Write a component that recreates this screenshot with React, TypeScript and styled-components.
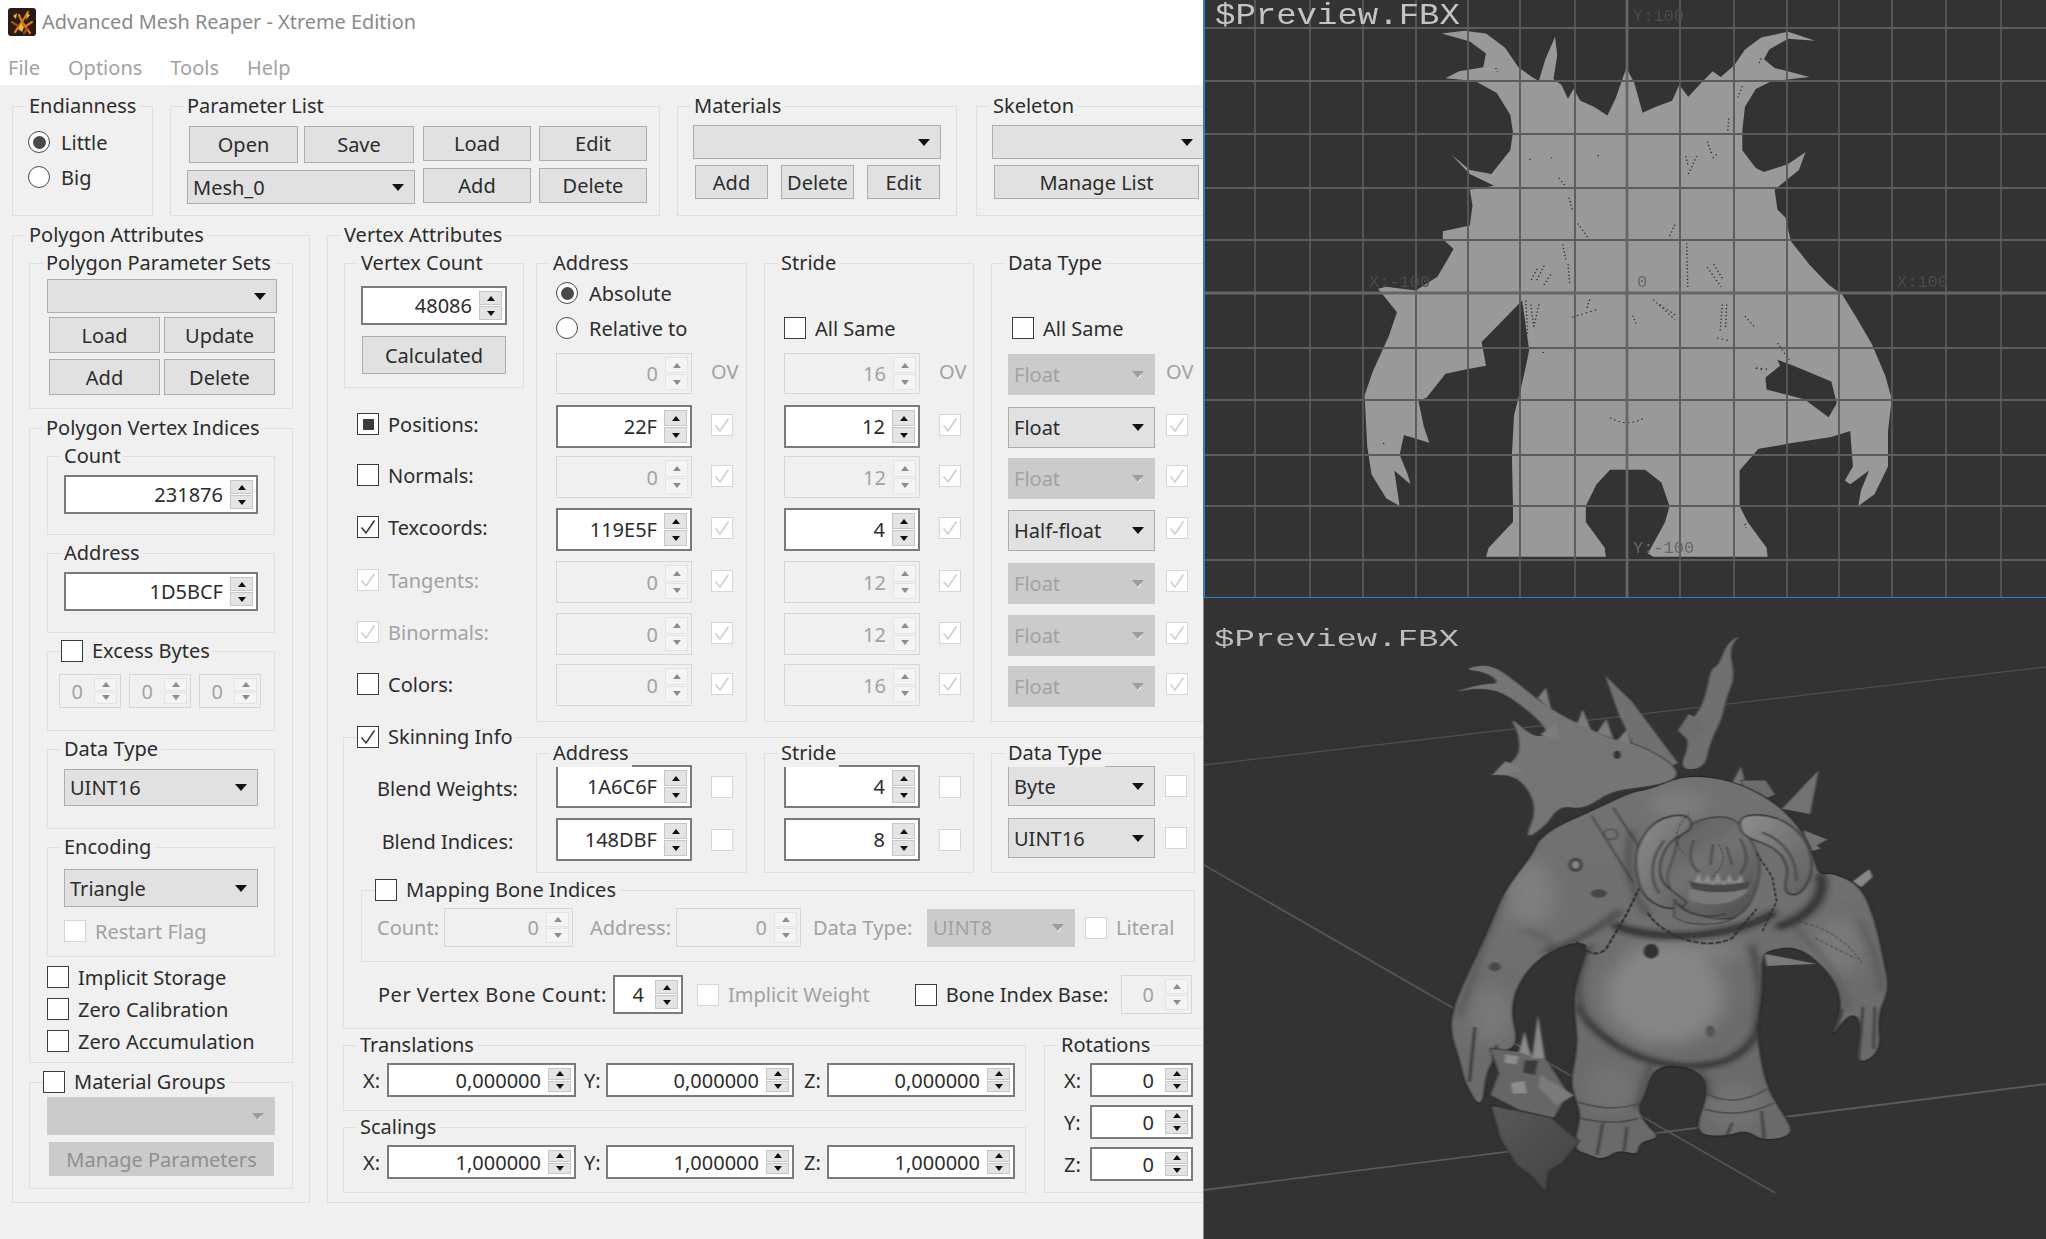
import React from "react";
import styled, { createGlobalStyle } from "styled-components";

const Global = createGlobalStyle`
  html, body { margin: 0; padding: 0; background: #fff; overflow: hidden; }
  * { box-sizing: border-box; }
`;

const Page = styled.div`
  display: flex; width: 2046px; height: 1239px; overflow: hidden;
  font-family: "Noto Sans", "Open Sans", sans-serif; font-size: 20px; color: #2c2c2c;
  filter: blur(0.35px);
`;
const LeftSide = styled.div`display: flex; flex-direction: column; width: 1203px; height: 1239px; overflow: hidden;`;
const TitleBar = styled.div`display: flex; align-items: center; gap: 6px; height: 43px; padding-left: 8px; color: #8a8a8a; font-size: 19.9px; background: #fff;`;
const MenuBar = styled.div`display: flex; align-items: center; gap: 28px; height: 42px; padding: 6px 0 0 8px; color: #a2a2a2; background: #fff;`;
const Panel = styled.div`flex: 1; background: #f0f0f0; padding: 21px 0 0 12px; display: flex; flex-direction: column; gap: 19px; overflow: hidden;`;
const Row = styled.div<{ $gap?: number }>`display: flex; align-items: flex-start; gap: ${(p) => p.$gap ?? 17}px;`;
const Col = styled.div<{ $gap?: number; $ml?: number }>`display: flex; flex-direction: column; gap: ${(p) => p.$gap ?? 0}px; margin-left: ${(p) => p.$ml ?? 0}px;`;

const Group = styled.section<{ $w: number; $h: number; $pad?: string; $gap?: number; $ml?: number; $row?: boolean }>`
  position: relative; flex: none; display: flex; flex-direction: ${(p) => (p.$row ? "row" : "column")};
  align-items: flex-start;
  width: ${(p) => p.$w}px; height: ${(p) => p.$h}px; padding: ${(p) => p.$pad ?? "0"};
  gap: ${(p) => p.$gap ?? 0}px; margin-left: ${(p) => p.$ml ?? 0}px;
  border: 1.5px solid #dedede;
`;
const Title = styled.div`
  position: absolute; top: -15px; left: 13px; padding: 0 3px; height: 28px; line-height: 28px;
  background: #f0f0f0; white-space: nowrap; color: #2c2c2c;
`;
const CheckTitle = styled(Title)`display: flex; align-items: center; gap: 9px; left: 13px; padding: 0 3px 0 0;`;

const Btn = styled.div<{ $w: number; $h: number; $off?: boolean; $ml?: number }>`
  flex: none; display: flex; align-items: center; justify-content: center;
  width: ${(p) => p.$w}px; height: ${(p) => p.$h}px; margin-left: ${(p) => p.$ml ?? 0}px;
  background: ${(p) => (p.$off ? "#cbcbcb" : "#e1e1e1")};
  border: 1.5px solid ${(p) => (p.$off ? "#cbcbcb" : "#adadad")};
  color: ${(p) => (p.$off ? "#8f8f8f" : "#2c2c2c")};
`;

const ComboBox = styled.div<{ $w: number; $h: number; $off?: boolean; $mt?: number }>`
  flex: none; display: flex; align-items: center; justify-content: space-between;
  width: ${(p) => p.$w}px; height: ${(p) => p.$h}px; padding: 0 10px 0 5px; margin-top: ${(p) => p.$mt ?? 0}px;
  background: ${(p) => (p.$off ? "#cbcbcb" : "#e1e1e1")};
  border: 1.5px solid ${(p) => (p.$off ? "#cbcbcb" : "#adadad")};
  color: ${(p) => (p.$off ? "#a2a2a2" : "#2c2c2c")};
`;
const ComboArrow = styled.i<{ $off?: boolean }>`
  flex: none; position: relative; width: 0; height: 0; border-style: solid; border-width: 7px 6.5px 0;
  border-color: ${(p) => (p.$off ? "#9d9d9d" : "#111")} transparent transparent;
  ${(p) => (p.$off ? `&::after { content: ""; position: absolute; left: -1px; top: -4px; width: 4px; height: 5px; background: #f2f2f2; clip-path: polygon(100% 0, 100% 30%, 30% 100%, 0 100%); }` : "")}
`;

const SpinBox = styled.div<{ $w: number; $h: number; $off?: boolean }>`
  flex: none; display: flex; align-items: stretch;
  width: ${(p) => p.$w}px; height: ${(p) => p.$h}px; padding: 3px;
  background: ${(p) => (p.$off ? "#f0f0f0" : "#fff")};
  border: ${(p) => (p.$off ? "1.5px solid #d6d6d6" : "2px solid #7b7b7b")};
  color: ${(p) => (p.$off ? "#a2a2a2" : "#2c2c2c")};
`;
const SpinValue = styled.span<{ $center?: boolean }>`
  flex: 1; display: flex; align-items: center; justify-content: flex-end;
  padding-right: ${(p) => (p.$center ? 11 : 7)}px; min-width: 0;
`;
const Stepper = styled.span`flex: none; display: flex; flex-direction: column; gap: 1px; width: 23px;`;
const Step = styled.span<{ $off?: boolean }>`
  flex: 1; display: flex; align-items: center; justify-content: center;
  background: ${(p) => (p.$off ? "#f4f4f4" : "#e4e4e4")};
  border: 1px solid ${(p) => (p.$off ? "#e4e4e4" : "#c6c6c6")};
`;
const Tri = styled.i<{ $down?: boolean; $off?: boolean }>`
  width: 0; height: 0; border-style: solid;
  border-width: ${(p) => (p.$down ? "5px 4.5px 0" : "0 4.5px 5px")};
  border-color: transparent;
  ${(p) => (p.$down ? "border-top-color" : "border-bottom-color")}: ${(p) => (p.$off ? "#8c8c8c" : "#111")};
`;

const CheckBox = styled.span<{ $off?: boolean; $mt?: number }>`
  flex: none; display: flex; align-items: center; justify-content: center;
  width: 22px; height: 22px; margin-top: ${(p) => p.$mt ?? 0}px;
  background: #fff; border: 1.5px solid ${(p) => (p.$off ? "#d6d6d6" : "#3c3c3c")};
`;
const PartialMark = styled.i`width: 11px; height: 11px; background: #3c3c3c;`;
const RadioDot = styled.span<{ $on?: boolean }>`
  flex: none; display: flex; align-items: center; justify-content: center;
  width: 22px; height: 22px; border-radius: 50%; background: #fff;
  border: 1.5px solid #4a4a4a;
  &::after { content: ""; display: ${(p) => (p.$on ? "block" : "none")}; width: 13px; height: 13px; border-radius: 50%; background: #4a4a4a; }
`;
const Option = styled.div<{ $gap?: number; $off?: boolean; $ml?: number; $mt?: number; $h?: number }>`
  flex: none; display: flex; align-items: center; gap: ${(p) => p.$gap ?? 9}px; white-space: nowrap;
  height: ${(p) => p.$h ?? 22}px; margin-left: ${(p) => p.$ml ?? 0}px; margin-top: ${(p) => p.$mt ?? 0}px;
  color: ${(p) => (p.$off ? "#a2a2a2" : "#2c2c2c")};
`;
const FieldLabel = styled.span<{ $w?: number; $ml?: number; $off?: boolean }>`
  flex: none; white-space: nowrap; width: ${(p) => (p.$w ? `${p.$w}px` : "auto")}; margin-left: ${(p) => p.$ml ?? 0}px;
  color: ${(p) => (p.$off ? "#a2a2a2" : "#2c2c2c")};
`;
const FlatRow = styled.div<{ $w?: number; $ml?: number; $mt?: number }>`
  display: flex; align-items: center; margin-left: ${(p) => p.$ml ?? 0}px; margin-top: ${(p) => p.$mt ?? 0}px;
  ${(p) => (p.$w ? `width:${p.$w}px;` : "")}
`;
const Spacer = styled.span`flex: 1;`;
const WideLabel = styled(FieldLabel)`letter-spacing: 0.5px;`;
const Head = styled.div<{ $ml?: number }>`
  display: flex; flex-direction: column; justify-content: flex-end; gap: 13px; height: 58px; margin: 0 0 14px ${(p) => p.$ml ?? 0}px;
`;
const AttrGrid = styled.div<{ $cell: number; $gap: number; $rows?: string }>`
  display: grid; align-items: start; grid-template-columns: ${(p) => p.$cell}px 22px; column-gap: ${(p) => p.$gap}px;
  grid-template-rows: ${(p) => p.$rows ?? "52px 51px 52px 53px 52px 51px 43px"};
`;
const NameGrid = styled.div`
  display: grid; margin: 17px 0 0 13px; grid-template-rows: 51px 52px 53px 52px 52px 43px; align-items: start;
`;
const BlendNames = styled.div`
  flex: none; width: 175px; height: 120px; display: grid; grid-template-rows: 53px 53px; padding: 22px 0 0 32px; text-align: center; line-height: 28px;
`;
const OvText = styled.span`height: 41px; line-height: 38px; color: #a2a2a2; white-space: nowrap;`;
const SmallBtnRow = styled.div<{ $gap: number; $mt: number; $ml?: number }>`
  display: flex; gap: ${(p) => p.$gap}px; margin-top: ${(p) => p.$mt}px; margin-left: ${(p) => p.$ml ?? 0}px;
`;
const ParamLeft = styled.div`display: flex; flex-direction: column; width: 228px; gap: 7px;`;
const ParamRight = styled.div`display: grid; grid-template-columns: 108px 108px; grid-auto-rows: 35px; gap: 7px 8px;`;

const RightSide = styled.div`display: flex; flex-direction: column; width: 843px; height: 1239px;`;
const TopView = styled.div`position: relative; flex: none; height: 598px; background: #333; border-left: 2px solid #2f7fc8; border-bottom: 1.5px solid #2f7fc8; overflow: hidden;`;
const BottomView = styled.div`position: relative; flex: 1; background: #333; border-left: 1.5px solid #8a8a8a; overflow: hidden;`;
const ViewSvg = styled.svg`display: block; width: 100%; height: 100%;`;
const FileTag = styled.span<{ $top: number; $sy: number; $c: string }>`
  position: absolute; left: 10px; top: ${(p) => p.$top}px; font-family: "Liberation Mono", monospace; font-size: 34px; line-height: 34px;
  color: ${(p) => p.$c}; transform-origin: left top; transform: scaleY(${(p) => p.$sy});
`;
const AxisTag = styled.span<{ $x: number; $y: number; $dark?: boolean }>`
  position: absolute; left: ${(p) => p.$x}px; top: ${(p) => p.$y}px; font-family: "Liberation Mono", monospace; font-size: 17px; line-height: 18px;
  color: ${(p) => (p.$dark ? "#666" : "#4c4c4c")};
`;

type SpinProps = { v: string; w: number; h: number; off?: boolean; center?: boolean };
const Spin = ({ v, w, h, off, center }: SpinProps) => (
  <SpinBox $w={w} $h={h} $off={off}>
    <SpinValue $center={center}>{v}</SpinValue>
    <Stepper>
      <Step $off={off}><Tri $off={off} /></Step>
      <Step $off={off}><Tri $down $off={off} /></Step>
    </Stepper>
  </SpinBox>
);
const Combo = ({ v, w, h, off, mt }: { v?: string; w: number; h: number; off?: boolean; mt?: number }) => (
  <ComboBox $w={w} $h={h} $off={off} $mt={mt}>
    <span>{v}</span>
    <ComboArrow $off={off} />
  </ComboBox>
);
type MarkKind = "none" | "check" | "partial";
const Check = ({ kind = "none", off, mt }: { kind?: MarkKind; off?: boolean; mt?: number }) => (
  <CheckBox $off={off} $mt={mt}>
    {kind === "check" && (
      <svg width="16" height="16" viewBox="0 0 16 16" fill="none">
        <path d="M1.5 8.5 L6 14 L14.5 1.5" stroke={off ? "#cfcfcf" : "#3c3c3c"} strokeWidth="1.6" />
      </svg>
    )}
    {kind === "partial" && <PartialMark />}
  </CheckBox>
);
const Opt = ({ label, kind, off, ml, mt, h }: { label: string; kind?: MarkKind; off?: boolean; ml?: number; mt?: number; h?: number }) => (
  <Option $off={off} $ml={ml} $mt={mt} $h={h}>
    <Check kind={kind} off={off} />
    {label}
  </Option>
);
const Radio = ({ label, on }: { label: string; on?: boolean }) => (
  <Option $gap={11}>
    <RadioDot $on={on} />
    {label}
  </Option>
);
const GroupTitle = ({ label }: { label: string }) => <Title>{label}</Title>;
const CheckedTitle = ({ label, kind }: { label: string; kind?: MarkKind }) => (
  <CheckTitle><Check kind={kind} />{label}</CheckTitle>
);

const AppIcon = () => (
  <svg width="28" height="28" viewBox="0 0 28 28">
    <rect width="28" height="28" rx="3" fill="#2a1c14" />
    <g fill="none" stroke="#d9791c" strokeWidth="2.2" strokeLinecap="round">
      <path d="M7 24 L14 14 L11 7 M14 14 L20 4 M14 14 L22 25 M18 18 L24 14" />
      <path d="M4 14 L10 18 M16 25 L19 21" stroke="#a34d14" />
    </g>
    <path d="M10 21 L13 15 L16 19 L14 24 Z M19 5 L22 7 L18 12 Z M5 8 L9 5 L8 11 Z" fill="#f0b233" />
  </svg>
);

const NAMES: { n: string; k?: MarkKind; off?: boolean }[] = [
  { n: "Positions:", k: "partial" },
  { n: "Normals:" },
  { n: "Texcoords:", k: "check" },
  { n: "Tangents:", k: "check", off: true },
  { n: "Binormals:", k: "check", off: true },
  { n: "Colors:" },
];
const ADDRESS = [["0", 1], ["22F", 0], ["0", 1], ["119E5F", 0], ["0", 1], ["0", 1], ["0", 1]] as const;
const STRIDE = [["16", 1], ["12", 0], ["12", 1], ["4", 0], ["12", 1], ["12", 1], ["16", 1]] as const;
const DTYPE = [["Float", 1], ["Float", 0], ["Float", 1], ["Half-float", 0], ["Float", 1], ["Float", 1], ["Float", 1]] as const;

const SpinCol = ({ data, w }: { data: readonly (readonly [string, number])[]; w: number }) => (
  <AttrGrid $cell={w} $gap={19}>
    {data.map(([v, off], i) => (
      <React.Fragment key={i}>
        <Spin v={v} w={w} h={i === 0 ? 41 : off ? 42 : 43} off={!!off} />
        {i === 0 ? <OvText>OV</OvText> : <Check kind="check" off mt={9} />}
      </React.Fragment>
    ))}
  </AttrGrid>
);

const SPECKS = "M625 680 l-12 30 M638 672 l-16 42 M650 694 l-14 30 M682 668 l3 50 M672 618 l6 38 M902 615 l2 115 M940 676 l26 50 M952 668 l18 40 M604 760 l3 84 M613 770 l6 60 M628 770 l-10 60 M968 770 l-4 66 M976 770 l-2 58 M722 758 l-6 26 M690 802 l48 -20 M840 758 l40 50 M852 770 l30 28 M802 798 l6 20 M700 565 l24 45 M880 568 l-10 30 M905 440 l16 -46 M684 500 l6 30 M940 358 l8 30 M958 855 l22 6 M1010 800 l20 30 M1070 868 l22 42 M1030 930 l24 4 M760 1056 q30 26 65 0 M548 172 l3 10 M1040 148 l-5 15 M980 300 l-2 30 M1005 218 l-8 28 M650 400 l8 -4 M610 403 l5 0 M738 392 l0 5 M665 450 l12 20 M900 395 l5 25 M950 400 l8 -10 M1030 932 l16 4 M636 890 l0 6 M925 878 l0 6 M340 1120 l2 6 M1010 1325 l2 10";

const Silhouette = () => (
  <g transform="translate(1200 0) scale(.5396 .3954)">
    <path
      fill="#999"
      d="M448 85 L490 78 L530 85 L565 120 L590 170 L615 195 L628 205 L640 150 L658 93 L662 140 L655 200 L670 215 L682 250 L692 225 L705 255 L730 270 L755 292 L770 250 L790 172 L805 210 L820 285 L845 270 L875 255 L888 215 L905 245 L930 208 L950 180 L965 195 L990 165 L1010 125 L1040 95 L1090 80 L1140 103 L1090 98 L1055 125 L1045 150 L1065 172 L1130 195 L1060 205 L1030 225 L1010 270 L1005 330 L1005 380 L1030 425 L1045 435 L1090 415 L1122 385 L1110 430 L1065 480 L1070 530 L1085 550 L1095 610 L1130 670 L1165 720 L1190 745 L1215 800 L1245 870 L1270 950 L1282 1010 L1275 1090 L1275 1180 L1250 1250 L1220 1280 L1225 1240 L1240 1190 L1205 1225 L1195 1215 L1210 1180 L1205 1090 L1170 1105 L1100 1120 L1035 1135 L1000 1190 L1000 1280 L1015 1320 L1050 1385 L1052 1408 L840 1408 L830 1400 L862 1320 L870 1280 L855 1220 L825 1188 L760 1188 L735 1225 L715 1280 L715 1320 L750 1385 L752 1408 L530 1408 L535 1385 L580 1320 L580 1280 L578 1150 L582 1050 L595 980 L605 920 L610 885 L597 760 L522 865 L530 925 L490 935 L455 945 L420 1005 L405 1015 L415 1080 L425 1120 L378 1100 L370 1150 L385 1200 L390 1225 L360 1190 L370 1280 L345 1260 L318 1200 L310 1130 L305 1000 L320 940 L350 850 L365 790 L330 730 L345 725 L400 735 L440 700 L470 630 L450 605 L450 585 L500 570 L505 520 L500 480 L545 470 L500 440 L465 390 L500 430 L540 440 L575 380 L580 335 L575 290 L550 235 L510 205 L455 198 L480 180 L525 170 L530 135 L500 105 Z"
    />
    <path fill="#333" d="M1070 910 L1100 925 L1170 965 L1180 1020 L1165 1055 L1120 1010 L1050 985 L1048 955 L1075 925 Z" />
    <path d={SPECKS} stroke="#2c2c2c" strokeWidth="2.6" strokeDasharray="3 6" fill="none" />
  </g>
);

const GRID_X = [1255, 1310, 1363, 1416, 1468, 1520, 1575, 1680, 1734, 1787, 1839, 1892, 1946, 2001];
const GRID_Y = [28, 81, 134, 188, 240, 348, 400, 455, 506, 560];

const TopScene = () => (
  <ViewSvg viewBox="1205 0 841 597" preserveAspectRatio="none">
    <Silhouette />
    {GRID_X.map((x) => <line key={x} x1={x} x2={x} y1="0" y2="597" stroke="#585858" strokeWidth="1.8" />)}
    {GRID_Y.map((y) => <line key={y} x1="1205" x2="2046" y1={y} y2={y} stroke="#5c5c5c" strokeWidth="2" />)}
    <line x1="1627" x2="1627" y1="0" y2="597" stroke="#666" strokeWidth="2.8" />
    <line x1="1205" x2="2046" y1="293" y2="293" stroke="#666" strokeWidth="2.8" />
  </ViewSvg>
);

const smooth = (pts: number[][]) => {
  const mid = (a: number[], b: number[]) => [(a[0] + b[0]) / 2, (a[1] + b[1]) / 2];
  const n = pts.length;
  const s = mid(pts[n - 1], pts[0]);
  let d = `M${s[0]} ${s[1]}`;
  pts.forEach((p, i) => {
    const m = mid(p, pts[(i + 1) % n]);
    d += ` Q${p[0]} ${p[1]} ${m[0]} ${m[1]}`;
  });
  return d + " Z";
};

const BODY = smooth([
  [625, 590], [660, 555], [720, 520], [800, 470], [830, 465], [900, 428], [985, 442], [1060, 490], [1110, 555], [1135, 620], [1145, 675], [1170, 668], [1225, 700], [1252, 790], [1266, 880], [1278, 955], [1255, 1020], [1262, 1112], [1212, 1145], [1228, 1040], [1205, 1010], [1164, 1085], [1192, 1000], [1172, 920], [1110, 850], [1052, 860], [1040, 880], [1042, 960], [1030, 1060], [1048, 1190], [1075, 1250], [1104, 1312], [1045, 1330], [1010, 1300], [975, 1318], [912, 1312], [945, 1200], [920, 1150], [842, 1140], [820, 1225], [810, 1245], [825, 1285], [854, 1320], [812, 1332], [812, 1364], [775, 1350], [745, 1376], [720, 1362], [688, 1347], [705, 1270], [695, 1225], [685, 1180], [700, 1090], [690, 990], [700, 920], [720, 850], [700, 840], [650, 858], [600, 915], [572, 1000], [590, 1090], [560, 1110], [530, 1150], [522, 1255], [490, 1190], [480, 1130], [462, 1060], [468, 1000], [490, 930], [530, 820], [560, 720], [615, 625],
]);

const LEFT_ANTLER = smooth([
  [484, 170], [535, 155], [580, 195], [640, 260], [695, 300], [770, 345], [815, 355], [885, 410], [880, 445], [820, 460], [760, 470], [710, 515], [665, 505], [640, 555], [598, 592], [625, 510], [590, 432], [532, 430], [590, 390], [590, 330], [570, 282], [620, 340], [650, 322], [570, 232], [520, 215], [458, 230], [520, 205], [555, 205], [530, 178],
]);
const RIGHT_ANTLER = smooth([
  [1050, 90], [1010, 78], [980, 115], [992, 190], [975, 240], [968, 290], [945, 350], [935, 415], [885, 418], [908, 345], [882, 322], [915, 290], [935, 240], [945, 168], [960, 160], [975, 105], [1005, 82],
]);
const FACE = smooth([[885, 575], [925, 535], [985, 530], [1015, 575], [1040, 640], [1030, 720], [1000, 780], [935, 795], [885, 770], [875, 720], [862, 680], [878, 630]]);
const LEFT_HORN = smooth([[900, 522], [840, 540], [806, 610], [808, 680], [825, 735], [870, 762], [908, 746], [880, 720], [852, 690], [850, 640], [870, 590], [915, 560]]);
const RIGHT_HORN = smooth([[1000, 525], [1070, 530], [1120, 580], [1135, 640], [1130, 690], [1105, 728], [1080, 715], [1092, 655], [1065, 605], [1000, 578]]);

const Hero = () => (
  <g transform="translate(1200 600) scale(.5396 .4075)">
    <defs>
      <linearGradient id="skin" x1="0" y1="0" x2="0.2" y2="1">
        <stop offset="0" stopColor="#737373" />
        <stop offset="1" stopColor="#6a6a6a" />
      </linearGradient>
      <linearGradient id="head" x1="0" y1="0" x2="0.6" y2="1">
        <stop offset="0" stopColor="#5c5c5c" />
        <stop offset=".5" stopColor="#727272" />
        <stop offset="1" stopColor="#565656" />
      </linearGradient>
      <linearGradient id="horn" x1="0" y1="0" x2="1" y2="1">
        <stop offset="0" stopColor="#8e8e8e" />
        <stop offset="1" stopColor="#5e5e5e" />
      </linearGradient>
      <linearGradient id="blade" x1="0" y1="0" x2="1" y2="1">
        <stop offset="0" stopColor="#585858" />
        <stop offset="1" stopColor="#434343" />
      </linearGradient>
      <clipPath id="bodyClip"><path d={BODY} /></clipPath>
      <filter id="soft" x="-10%" y="-10%" width="120%" height="120%"><feGaussianBlur stdDeviation="1.5" /></filter>
      <filter id="shade" x="-30%" y="-30%" width="160%" height="160%"><feGaussianBlur stdDeviation="7" /></filter>
      <filter id="wide" x="-40%" y="-40%" width="180%" height="180%"><feGaussianBlur stdDeviation="18" /></filter>
    </defs>

    <g filter="url(#soft)" strokeLinejoin="round">
      <path fill="#6f6f6f" d="M750 185 L800 250 L885 400 L860 415 L800 350 L775 280 Z" />
      <path fill="#707070" stroke="#333" strokeWidth="2.5" d={RIGHT_ANTLER} />
      <path fill="#757575" stroke="#3a3a3a" strokeWidth="2" d={LEFT_ANTLER} />
      <path fill="#7c7c7c" d="M698 305 L708 268 L724 320 Z M735 325 L752 292 L765 340 Z M772 345 L790 318 L798 355 Z M625 240 L640 215 L650 270 Z M540 430 L565 395 L600 420 Z M630 330 L660 300 L665 345 Z" />
      <path fill="#6d6d6d" d="M885 320 L905 280 L920 290 L935 320 L905 345 Z" />
      <ellipse cx="772" cy="380" rx="7" ry="10" fill="#363636" />
      <path fill="#727272" d="M1146 418 L1130 525 L1078 512 Z M1118 565 L1162 588 L1128 612 Z M1002 408 L1012 462 L984 452 Z M1122 620 L1130 590 L1150 610 Z" />
      <path fill="#6c6c6c" stroke="#333" strokeWidth="2" d="M1002 442 L1048 442 L1066 478 L1040 492 L1010 478 Z" />
      <path fill="#888" d="M1210 690 L1240 660 L1246 680 L1225 705 Z" />
      <path fill="#7a7a7a" d="M1045 868 L1142 893 L1050 898 Z" />
      <path fill="url(#skin)" stroke="#272727" strokeWidth="3" d={BODY} />
    </g>

    <g clipPath="url(#bodyClip)">
      <g filter="url(#wide)">
        <ellipse cx="860" cy="970" rx="110" ry="120" fill="#8a8a8a" opacity=".85" />
        <ellipse cx="610" cy="720" rx="45" ry="80" fill="#858585" opacity=".7" />
        <ellipse cx="900" cy="860" rx="110" ry="26" fill="#888" opacity=".7" />
        <ellipse cx="885" cy="500" rx="55" ry="35" fill="#8c8c8c" opacity=".5" />
        <ellipse cx="1180" cy="850" rx="45" ry="70" fill="#828282" opacity=".6" />
        <ellipse cx="540" cy="1020" rx="40" ry="70" fill="#808080" opacity=".6" />
        <ellipse cx="760" cy="1200" rx="50" ry="60" fill="#787878" opacity=".7" />
        <ellipse cx="990" cy="1240" rx="50" ry="60" fill="#787878" opacity=".7" />
      </g>
      <g filter="url(#shade)" fill="none" strokeLinecap="round">
        <path d="M700 1000 C745 1105 870 1175 975 1130 C1010 1108 1030 1080 1036 1040" stroke="#1e1e1e" strokeWidth="12" opacity=".85" />
        <path d="M722 850 C690 930 696 1000 722 1045" stroke="#3a3a3a" strokeWidth="10" opacity=".8" />
        <path d="M1022 850 C1040 940 1040 1000 1030 1040" stroke="#333" strokeWidth="10" opacity=".8" />
        <path d="M640 862 C685 845 730 815 775 765" stroke="#333" strokeWidth="12" opacity=".7" />
        <path d="M770 800 C850 840 980 830 1060 770" stroke="#1d1d1d" strokeWidth="16" opacity=".8" />
        <path d="M1075 800 C1125 780 1160 730 1150 680" stroke="#2b2b2b" strokeWidth="20" opacity=".85" />
        <path d="M800 570 C785 640 795 720 830 770" stroke="#3d3d3d" strokeWidth="10" opacity=".7" />
        <path d="M835 1135 C825 1180 815 1215 812 1245" stroke="#454545" strokeWidth="12" opacity=".7" />
        <path d="M925 1150 C940 1180 945 1200 942 1215" stroke="#454545" strokeWidth="10" opacity=".7" />
        <path d="M600 810 C630 820 650 840 660 858" stroke="#505050" strokeWidth="10" opacity=".6" />
        <path d="M560 720 C530 820 500 930 480 1020" stroke="#3c3c3c" strokeWidth="8" opacity=".6" />
        <path d="M1100 800 C1140 860 1180 900 1200 1000" stroke="#4a4a4a" strokeWidth="9" opacity=".55" />
        <path d="M1225 790 C1245 860 1260 900 1262 960" stroke="#3a3a3a" strokeWidth="7" opacity=".55" />
      </g>
      <g fill="none" stroke="#373737" strokeLinecap="round" filter="url(#soft)">
        <path d="M508 1050 L498 1180 M548 1095 L528 1230" strokeWidth="5" />
        <path d="M1190 1005 L1172 1080 M1228 1000 L1220 1130 M1250 1000 L1248 1100" strokeWidth="4" />
        <path d="M745 1285 L735 1360 M790 1295 L785 1350 M985 1285 L975 1315 M1040 1255 L1045 1325" strokeWidth="4" />
        <path d="M700 1232 C740 1250 780 1250 815 1235 M700 1270 C745 1285 780 1285 810 1272" strokeWidth="2.4" />
        <path d="M938 1212 C975 1235 1010 1232 1050 1200 M935 1250 C975 1265 1020 1262 1062 1235" strokeWidth="2.4" />
        <path d="M725 530 L800 690 M765 510 L830 640" strokeWidth="2.6" />
      </g>
    </g>

    <g filter="url(#soft)" strokeLinejoin="round">
      <path fill="url(#head)" stroke="#343434" strokeWidth="2.5" d={FACE} />
      <path fill="url(#horn)" stroke="#262626" strokeWidth="3" d={LEFT_HORN} />
      <path fill="url(#horn)" stroke="#262626" strokeWidth="3" d={RIGHT_HORN} />
      <path fill="none" stroke="#494949" strokeWidth="5" d="M860 590 C835 630 830 680 850 720" />
      <path fill="none" stroke="#4a4a4a" strokeWidth="5" d="M1040 570 C1085 590 1105 640 1105 690" />
      <path fill="none" stroke="#444" strokeWidth="4" d="M915 590 C905 620 905 650 925 670 M1000 585 C1015 620 1015 650 1000 672 M950 600 L945 650 M975 605 L985 650" />
      <path fill="#7a7a7a" d="M905 695 C935 685 985 685 1020 695 C1010 745 950 760 905 735 Z" />
      <path fill="#4a4a4a" d="M905 690 C935 702 985 702 1020 690 L1015 708 C980 720 940 720 910 708 Z" />
      <path fill="#8e8e8e" d="M925 668 L930 698 L940 672 L950 702 L958 668 L970 702 L980 672 L990 698 L1002 674 L1006 692 L915 692 Z" />
      <path fill="#6a6a6a" stroke="#2c2c2c" strokeWidth="2" d="M878 735 C900 772 950 790 990 780 C960 802 905 802 878 778 Z" />
      <path fill="none" stroke="#3a3a3a" strokeWidth="3" d="M882 745 C905 780 950 780 975 770" />
    </g>

    <g filter="url(#soft)" strokeLinejoin="round">
      <path fill="url(#blade)" stroke="#2a2a2a" strokeWidth="2" d="M538 1240 L650 1270 L702 1328 L672 1380 L645 1402 L640 1455 L612 1412 L585 1386 L555 1322 Z" />
      <path fill="#666" stroke="#2b2b2b" strokeWidth="2" d="M536 1100 L590 1108 L640 1125 L682 1210 L655 1272 L590 1252 L536 1215 L552 1160 Z" />
      <path fill="#8a8a8a" d="M614 1125 L625 1018 L638 1125 Z M590 1110 L600 1058 L612 1120 Z" />
      <path fill="#7a7a7a" d="M630 1165 L692 1215 L660 1240 L625 1195 Z" />
      <path fill="#8c8c8c" d="M565 1115 L590 1120 L585 1140 L562 1135 Z M575 1185 L600 1180 L605 1210 L578 1212 Z" />
      <path fill="#3a3a3a" d="M600 1130 L625 1130 L620 1165 L598 1160 Z" />
    </g>

    <g fill="none" stroke="#2f2f2f" strokeLinecap="round">
      <path d="M698 840 C715 870 740 875 752 855 L790 770 L812 710" strokeWidth="4.5" strokeDasharray="7 7" />
      <path d="M830 770 C860 830 940 862 985 830 L1030 760" strokeWidth="4.5" strokeDasharray="7 7" />
      <path d="M1042 812 L1068 740 L1060 680 L1030 620" strokeWidth="3.5" strokeDasharray="6 7" />
      <path d="M1110 790 C1160 800 1210 850 1225 890 M1140 830 C1170 850 1200 870 1215 880" strokeWidth="1.6" strokeDasharray="5 6" />
      <path d="M905 525 C880 555 870 600 900 625 M960 600 C975 630 970 650 950 680" strokeWidth="1.8" strokeDasharray="4 6" />
    </g>
    <g filter="url(#soft)">
      <ellipse cx="695" cy="650" rx="13" ry="18" fill="#474747" />
      <ellipse cx="695" cy="650" rx="6" ry="9" fill="#8a8a8a" />
      <ellipse cx="738" cy="720" rx="15" ry="10" fill="#474747" />
      <ellipse cx="835" cy="862" rx="14" ry="18" fill="#333" />
      <ellipse cx="545" cy="900" rx="11" ry="11" fill="#4a4a4a" />
      <ellipse cx="945" cy="1058" rx="8" ry="14" fill="#555" />
      <circle cx="760" cy="575" r="13" fill="none" stroke="#4c4c4c" strokeWidth="3" />
    </g>
  </g>
);

const BottomScene = () => (
  <ViewSvg viewBox="1203 598 843 641" preserveAspectRatio="none">
    <line x1="1203" y1="765" x2="2046" y2="667" strokeWidth="1.3" stroke="#4e4e4e" />
    <line x1="1203" y1="865" x2="1775" y2="1193" strokeWidth="1.8" stroke="#555" />
    <line x1="1203" y1="1190" x2="2046" y2="1084" strokeWidth="1.8" stroke="#5a5a5a" />
    <Hero />
  </ViewSvg>
);

const XYZ = ({ v }: { v: string }) => (
  <FlatRow $ml={19} $mt={17}>
    <FieldLabel $w={24}>X:</FieldLabel><Spin v={v} w={189} h={34} />
    <FieldLabel $w={22} $ml={8}>Y:</FieldLabel><Spin v={v} w={188} h={34} />
    <FieldLabel $w={23} $ml={10}>Z:</FieldLabel><Spin v={v} w={188} h={34} />
  </FlatRow>
);

export default function App() {
  return (
    <Page>
      <Global />
      <LeftSide>
        <TitleBar><AppIcon />Advanced Mesh Reaper - Xtreme Edition</TitleBar>
        <MenuBar><span>File</span><span>Options</span><span>Tools</span><span>Help</span></MenuBar>
        <Panel>
          <Row>
            <Group $w={141} $h={110} $pad="24px 0 0 15px" $gap={13}>
              <GroupTitle label="Endianness" />
              <Radio label="Little" on />
              <Radio label="Big" />
            </Group>
            <Group $w={490} $h={110} $row $pad="19px 0 0 16px" $gap={8}>
              <GroupTitle label="Parameter List" />
              <ParamLeft>
                <SmallBtnRow $gap={6} $mt={0} $ml={2}>
                  <Btn $w={109} $h={37}>Open</Btn>
                  <Btn $w={110} $h={37}>Save</Btn>
                </SmallBtnRow>
                <Combo v="Mesh_0" w={228} h={34} />
              </ParamLeft>
              <ParamRight>
                <Btn $w={108} $h={35}>Load</Btn>
                <Btn $w={108} $h={35}>Edit</Btn>
                <Btn $w={108} $h={35}>Add</Btn>
                <Btn $w={108} $h={35}>Delete</Btn>
              </ParamRight>
            </Group>
            <Group $w={280} $h={110} $pad="18px 0 0 15px">
              <GroupTitle label="Materials" />
              <Combo w={248} h={34} />
              <SmallBtnRow $gap={13} $mt={6} $ml={2}>
                <Btn $w={73} $h={34}>Add</Btn>
                <Btn $w={73} $h={34}>Delete</Btn>
                <Btn $w={73} $h={34}>Edit</Btn>
              </SmallBtnRow>
            </Group>
            <Group $w={240} $h={110} $ml={2} $pad="18px 0 0 15px">
              <GroupTitle label="Skeleton" />
              <Combo w={212} h={34} />
              <SmallBtnRow $gap={0} $mt={6} $ml={2}>
                <Btn $w={205} $h={34}>Manage List</Btn>
              </SmallBtnRow>
            </Group>
          </Row>
          <Row>
            <Group $w={298} $h={968} $pad="27px 0 0 16px" $gap={19}>
              <GroupTitle label="Polygon Attributes" />
              <Group $w={264} $h={146} $pad="15px 0 0 17px">
                <GroupTitle label="Polygon Parameter Sets" />
                <Combo w={230} h={34} />
                <SmallBtnRow $gap={4} $mt={4} $ml={2}>
                  <Btn $w={111} $h={36}>Load</Btn>
                  <Btn $w={111} $h={36}>Update</Btn>
                </SmallBtnRow>
                <SmallBtnRow $gap={4} $mt={6} $ml={2}>
                  <Btn $w={111} $h={36}>Add</Btn>
                  <Btn $w={111} $h={36}>Delete</Btn>
                </SmallBtnRow>
              </Group>
              <Group $w={264} $h={635} $pad="27px 0 0 17px" $gap={18}>
                <GroupTitle label="Polygon Vertex Indices" />
                <Group $w={228} $h={79} $pad="18px 0 0 16px">
                  <GroupTitle label="Count" />
                  <Spin v="231876" w={194} h={39} />
                </Group>
                <Group $w={228} $h={80} $pad="18px 0 0 16px">
                  <GroupTitle label="Address" />
                  <Spin v="1D5BCF" w={194} h={39} />
                </Group>
                <Group $w={228} $h={80} $row $pad="22px 0 0 11px" $gap={8}>
                  <CheckedTitle label="Excess Bytes" />
                  <Spin v="0" w={62} h={34} off center />
                  <Spin v="0" w={62} h={34} off center />
                  <Spin v="0" w={62} h={34} off center />
                </Group>
                <Group $w={228} $h={80} $pad="19px 0 0 16px">
                  <GroupTitle label="Data Type" />
                  <Combo v="UINT16" w={194} h={37} />
                </Group>
                <Group $w={228} $h={110} $pad="21px 0 0 16px" $gap={13}>
                  <GroupTitle label="Encoding" />
                  <Combo v="Triangle" w={194} h={38} />
                  <Opt label="Restart Flag" off />
                </Group>
                <Col $gap={10}>
                  <Opt label="Implicit Storage" mt={-9} />
                  <Opt label="Zero Calibration" />
                  <Opt label="Zero Accumulation" />
                </Col>
              </Group>
              <Group $w={264} $h={107} $pad="14px 0 0 17px" $gap={7}>
                <CheckedTitle label="Material Groups" />
                <Combo w={228} h={38} off />
                <Btn $w={225} $h={34} $off $ml={2}>Manage Parameters</Btn>
              </Group>
            </Group>
            <Group $w={900} $h={968} $pad="27px 0 0 16px" $gap={15}>
              <GroupTitle label="Vertex Attributes" />
              <Row $gap={17}>
                <Col>
                  <Group $w={180} $h={125} $pad="22px 0 0 16px" $gap={11}>
                    <GroupTitle label="Vertex Count" />
                    <Spin v="48086" w={146} h={39} />
                    <Btn $w={144} $h={38} $ml={1}>Calculated</Btn>
                  </Group>
                  <NameGrid>
                    {NAMES.map(({ n, k, off }) => <Opt key={n} label={n} kind={k} off={off} ml={0} mt={8} />)}
                  </NameGrid>
                </Col>
                <Group $w={211} $h={459} $ml={-5} $pad="17px 0 0 19px">
                  <GroupTitle label="Address" />
                  <Head>
                    <Radio label="Absolute" on />
                    <Radio label="Relative to" />
                  </Head>
                  <SpinCol data={ADDRESS} w={136} />
                </Group>
                <Group $w={210} $h={459} $pad="17px 0 0 19px">
                  <GroupTitle label="Stride" />
                  <Head>
                    <Opt label="All Same" />
                  </Head>
                  <SpinCol data={STRIDE} w={136} />
                </Group>
                <Group $w={240} $h={459} $pad="17px 0 0 16px">
                  <GroupTitle label="Data Type" />
                  <Head $ml={4}>
                    <Opt label="All Same" />
                  </Head>
                  <AttrGrid $cell={147} $gap={11}>
                    {DTYPE.map(([v, off], i) => (
                      <React.Fragment key={i}>
                        <Combo v={v} w={147} h={41} off={!!off} mt={i ? 2 : 1} />
                        {i === 0 ? <OvText>OV</OvText> : <Check kind="check" off mt={9} />}
                      </React.Fragment>
                    ))}
                  </AttrGrid>
                </Group>
              </Row>
              <Col $gap={16} $ml={-1}>
                <Group $w={880} $h={292} $pad="15px 0 0 0" $gap={17}>
                  <CheckedTitle label="Skinning Info" kind="check" />
                  <Row $gap={17}>
                    <BlendNames>
                      <span>Blend Weights:</span>
                      <span>Blend Indices:</span>
                    </BlendNames>
                    <Group $w={211} $h={120} $pad="11px 0 0 19px">
                      <GroupTitle label="Address" />
                      <AttrGrid $cell={136} $gap={19} $rows="53px 53px">
                        <Spin v="1A6C6F" w={136} h={43} />
                        <Check off mt={11} />
                        <Spin v="148DBF" w={136} h={43} />
                        <Check off mt={11} />
                      </AttrGrid>
                    </Group>
                    <Group $w={210} $h={120} $pad="11px 0 0 19px">
                      <GroupTitle label="Stride" />
                      <AttrGrid $cell={136} $gap={19} $rows="53px 53px">
                        <Spin v="4" w={136} h={43} />
                        <Check off mt={11} />
                        <Spin v="8" w={136} h={43} />
                        <Check off mt={11} />
                      </AttrGrid>
                    </Group>
                    <Group $w={204} $h={120} $pad="12px 0 0 16px">
                      <GroupTitle label="Data Type" />
                      <AttrGrid $cell={147} $gap={10} $rows="52px 52px">
                        <Combo v="Byte" w={147} h={40} />
                        <Check off mt={9} />
                        <Combo v="UINT16" w={147} h={40} />
                        <Check off mt={9} />
                      </AttrGrid>
                    </Group>
                  </Row>
                  <Group $w={834} $h={72} $ml={17} $row $pad="17px 0 0 15px">
                    <CheckedTitle label="Mapping Bone Indices" />
                    <FlatRow>
                      <FieldLabel $w={67} $off>Count:</FieldLabel>
                      <Spin v="0" w={129} h={39} off />
                      <FieldLabel $w={86} $ml={17} $off>Address:</FieldLabel>
                      <Spin v="0" w={125} h={39} off />
                      <FieldLabel $w={114} $ml={12} $off>Data Type:</FieldLabel>
                      <Combo v="UINT8" w={148} h={38} off />
                      <Opt label="Literal" off ml={10} />
                    </FlatRow>
                  </Group>
                  <FlatRow $w={814} $ml={34} $mt={-4}>
                    <WideLabel $w={235}>Per Vertex Bone Count:</WideLabel>
                    <Spin v="4" w={70} h={39} center />
                    <Opt label="Implicit Weight" off ml={14} />
                    <Opt label="Bone Index Base:" ml={45} />
                    <Spacer />
                    <Spin v="0" w={71} h={39} off center />
                  </FlatRow>
                </Group>
                <Row $gap={18}>
                  <Col $gap={16}>
                    <Group $w={683} $h={66}>
                      <GroupTitle label="Translations" />
                      <XYZ v="0,000000" />
                    </Group>
                    <Group $w={683} $h={66}>
                      <GroupTitle label="Scalings" />
                      <XYZ v="1,000000" />
                    </Group>
                  </Col>
                  <Group $w={180} $h={148} $pad="17px 0 0 19px" $gap={8}>
                    <GroupTitle label="Rotations" />
                    {["X:", "Y:", "Z:"].map((a) => (
                      <FlatRow key={a}>
                        <FieldLabel $w={26}>{a}</FieldLabel>
                        <Spin v="0" w={103} h={34} center />
                      </FlatRow>
                    ))}
                  </Group>
                </Row>
              </Col>
            </Group>
          </Row>
        </Panel>
      </LeftSide>
      <RightSide>
        <TopView>
          <TopScene />
          <FileTag $top={2} $sy={0.85} $c="#c4c4c4">$Preview.FBX</FileTag>
          <AxisTag $x={428} $y={8}>Y:100</AxisTag>
          <AxisTag $x={164} $y={274}>X:-100</AxisTag>
          <AxisTag $x={692} $y={274}>X:100</AxisTag>
          <AxisTag $x={432} $y={274} $dark>0</AxisTag>
          <AxisTag $x={428} $y={540} $dark>Y:-100</AxisTag>
        </TopView>
        <BottomView>
          <BottomScene />
          <FileTag $top={30} $sy={0.7} $c="#bdbdbd">$Preview.FBX</FileTag>
        </BottomView>
      </RightSide>
    </Page>
  );
}
